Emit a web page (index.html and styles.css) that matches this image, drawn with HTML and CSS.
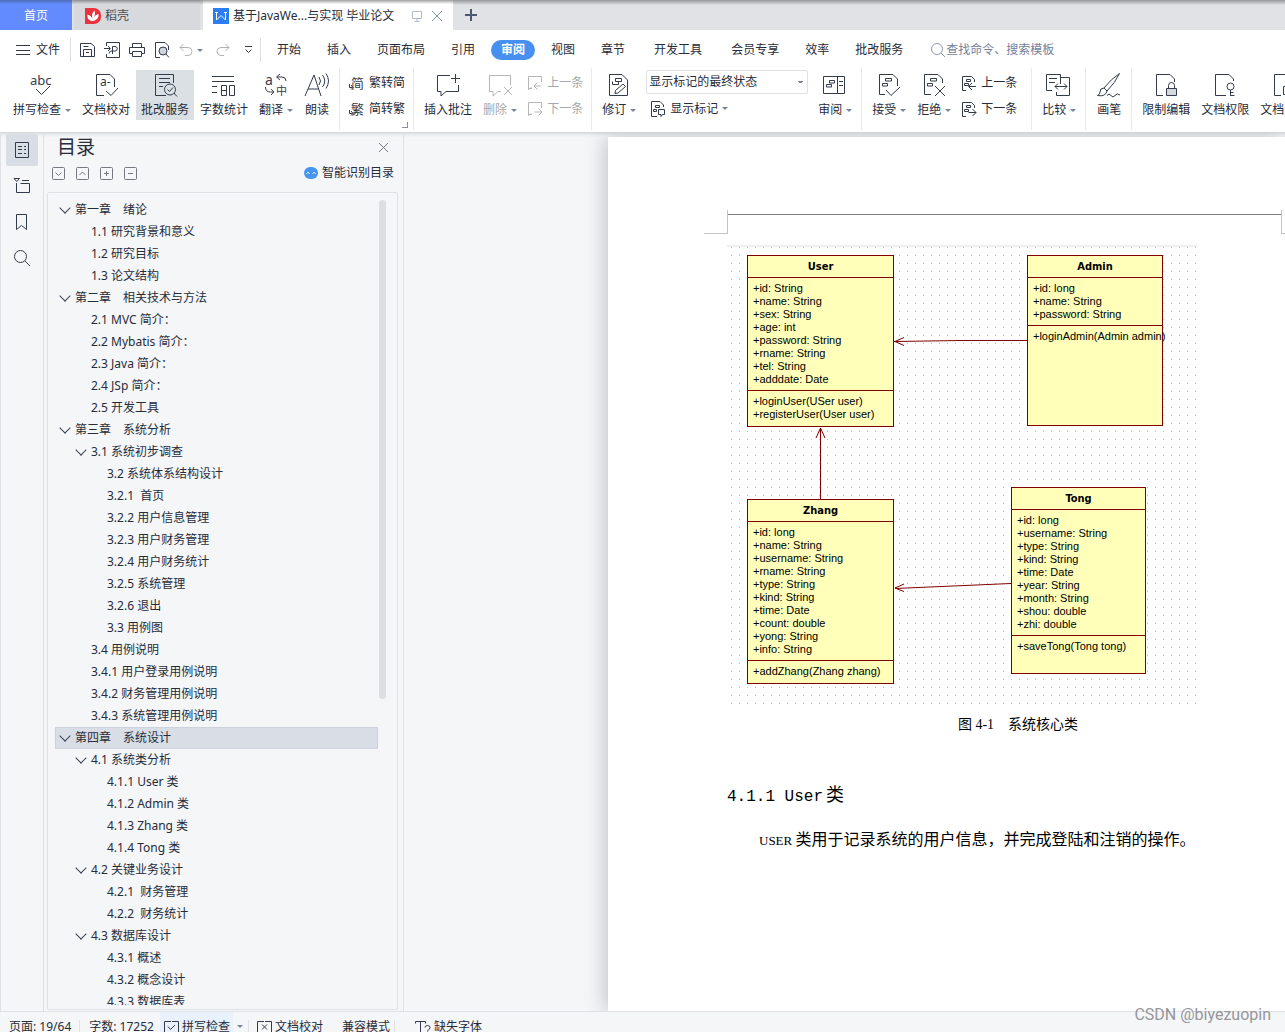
FILE: index.html
```html
<!DOCTYPE html>
<html lang="zh-CN">
<head>
<meta charset="utf-8">
<title>基于JavaWeb的设计与实现 毕业论文</title>
<link rel="stylesheet" href="styles.css">
</head>
<body>
<svg class="defs" aria-hidden="true">
  <symbol id="prev" viewBox="0 0 16 16"><path d="M5 13.500H1.500V1.500H14.500V7M14 11H7.500M10.500 7.500L7 11l3.500 3.500M1.500 11v3.500l3-2"/></symbol>
  <symbol id="next" viewBox="0 0 16 16"><path d="M5 13.500H1.500V1.500H14.500V7M7.500 11H15M11.500 7.500L15 11l-3.500 3.500M1.500 11v3.500l3-2"/></symbol>
  <symbol id="rprev" viewBox="0 0 16 16"><path d="M5 15.500H1.500V1.500H10.500L13.500 4.500V7M15 11.500H8M11 8l-3.500 3.500L11 15M5.500 4.500h4v2h-4zM3.500 8.500h4v2h-4z"/></symbol>
  <symbol id="rnext" viewBox="0 0 16 16"><path d="M5 15.500H1.500V1.500H10.500L13.500 4.500V7M7.500 11.500H15M11.500 8l3.500 3.500-3.500 3.500M5.500 4.500h4v2h-4zM3.500 8.500h4v2h-4z"/></symbol>
</svg>
<div class="app">
  <header class="tabs">
    <button class="tab tab-home">首页</button>
    <button class="tab tab-docer">
      <svg width="16" height="16" viewBox="0 0 16 16"><path fill="#e9343f" d="M0 0h9a7 7 0 0 1 7 7v2a7 7 0 0 1-7 7H0z"/><path fill="#fff" d="M7.500 13C3 12.500 2 9.500 2.500 6.500 5 7 6.800 9 7.500 11 6.500 7.500 7 4.500 9.500 2.500c1 2.500.5 5-.8 7.500C10 7.500 11.500 6.300 13.500 6c.5 4-2 6.500-6 7z"/></svg>
      稻壳
    </button>
    <div class="tab tab-doc">
      <svg width="16" height="16" viewBox="0 0 16 16"><path fill="#2b7df0" d="M0 0h16v16H0z"/><path fill="none" stroke="#fff" d="M3.500 4v8L8 7.500l4.500 4.500V4M2 4.500h3M11 4.500h3"/></svg>
      <span class="tab-name">基于JavaWe...与实现 毕业论文</span>
      <svg class="line pale" width="12" height="12" viewBox="0 0 12 12"><path d="M1.500 1.500h9v7h-9zM6 8.500v3M3.500 11.500h5"/></svg>
      <button class="plain" aria-label="关闭标签"><svg class="line pale-dark" width="12" height="12" viewBox="0 0 12 12"><path d="M1 1l10 10M11 1L1 11"/></svg></button>
    </div>
    <button class="plain new-tab" aria-label="新建"><svg width="12" height="12" viewBox="0 0 12 12"><path fill="none" stroke="#4b566f" stroke-width="2" d="M6 0v12M0 6h12"/></svg></button>
  </header>

  <nav class="menu">
    <button class="plain file"><svg class="line" width="14" height="11" viewBox="0 0 14 11"><path d="M0 .5h14M0 5.500h14M0 9.500h14"/></svg>文件</button>
    <div class="quick">
      <button class="plain" aria-label="保存"><svg class="line" width="16" height="16" viewBox="0 0 16 16"><path d="M1.500 14.500v-13H12l3.500 3v10zM4.500 14.500V7.500h8v7M4.500 4.500h5M7 10.500h3"/></svg></button>
      <button class="plain" aria-label="输出为PDF"><svg class="line" width="16" height="16" viewBox="0 0 16 16"><path d="M2.500 4V.500h13v15h-13V12M0 6.500h6M4 4l2.500 2.500L4 9M8.500 12V4.500H11a2 2 0 0 1 0 4.500H6.500L5 11.500"/></svg></button>
      <button class="plain" aria-label="打印"><svg class="line" width="16" height="16" viewBox="0 0 16 16"><path d="M3.500 5.500v-4h9v4M3.500 11.500h-3v-6h15v6h-3M3.500 9.500h9v5h-9z"/></svg></button>
      <button class="plain" aria-label="打印预览"><svg class="line" width="16" height="16" viewBox="0 0 16 16"><path d="M6 15.500H1.500V.500H11L14.500 4V8M12 12l3 3.500"/><circle cx="9" cy="9" r="4" fill="#cfd6dd"/></svg></button>
      <button class="plain" aria-label="撤销"><svg class="line faded" width="14" height="14" viewBox="0 0 14 14"><path d="M4.500 1L1 4.500 4.500 8M1 4.500h8a4 4 0 0 1 0 8H6"/></svg><i class="caret"></i></button>
      <button class="plain redo" aria-label="恢复"><svg class="line faded" width="14" height="14" viewBox="0 0 14 14"><path d="M9.500 1L13 4.500 9.500 8M13 4.500H5a4 4 0 0 0 0 8h3"/></svg></button>
      <button class="plain" aria-label="更多"><svg class="line" width="9" height="8" viewBox="0 0 9 8"><path d="M1 .5h7M1.500 3.500l3 3 3-3"/></svg></button>
    </div>
    <div class="menu-items">
      <button class="plain">开始</button><button class="plain">插入</button><button class="plain">页面布局</button><button class="plain">引用</button><button class="plain current">审阅</button><button class="plain">视图</button><button class="plain">章节</button><button class="plain wide">开发工具</button><button class="plain wide">会员专享</button><button class="plain">效率</button><button class="plain">批改服务</button>
    </div>
    <label class="search"><svg class="line" width="16" height="16" viewBox="0 0 16 16"><circle cx="7" cy="7" r="5.500"/><path d="M11 11l4 4"/></svg><input type="text" placeholder="查找命令、搜索模板" aria-label="查找命令"></label>
  </nav>

  <div class="ribbon">
    <div class="group">
      <button class="big"><svg class="line" width="26" height="26" viewBox="0 0 26 26"><text x="1" y="13" font-size="13">abc</text><path d="M7 17l5.500 5.500L21 14"/></svg><span>拼写检查<i class="caret"></i></span></button>
      <button class="big"><svg class="line" width="26" height="26" viewBox="0 0 26 26"><text x="7" y="14" font-size="12">a-</text><path d="M11 23.500H3.500V2.500H17L21.500 7V15M13 19l5 4.500L25 16"/></svg><span>文档校对</span></button>
      <button class="big pressed"><svg class="line" width="26" height="26" viewBox="0 0 26 26"><path d="M14 23.500H3.500V2.500H21.500V11M7 6.500h11M7 10.500h11M7 14.500h4M22 21l3 3.500"/><circle cx="18" cy="17.500" r="5.500"/><path d="M15.500 17.500l2 2 3.500-4"/></svg><span>批改服务</span></button>
      <button class="big"><svg class="line" width="26" height="26" viewBox="0 0 26 26"><path d="M1 4.500h22M1 9.500h22M1 14.500h5M1 20.500h5M10.500 13.500h5v10h-5zM10.500 18.500h5M18.500 13.500h5v10h-5z"/></svg><span>字数统计</span></button>
      <button class="big"><svg class="line" width="26" height="26" viewBox="0 0 26 26"><text x="2" y="13" font-size="14">a</text><text x="13" y="23" font-size="11">中</text><path d="M17 2l-3.500 3L17 8M14 5h5q4 0 4 4M2.500 15q0 5 5 5h3M8 17l3 3-3 3"/></svg><span>翻译<i class="caret"></i></span></button>
      <button class="big"><svg class="line" width="26" height="26" viewBox="0 0 26 26"><path d="M1 24L10 3l7 21M4 17h11M15 5q3 4 0 8M18.500 3q4.500 6 0 12M22 1.500q5 7.500 0 15"/></svg><span>朗读</span></button>
    </div>
    <div class="group launch">
      <div class="minis">
        <button class="mini"><svg class="line" width="16" height="16" viewBox="0 0 16 16"><text x="2" y="13" font-size="13">简</text><path d="M.5 9v3.500h3M2 10l2 2.500-2 2"/></svg>繁转简</button>
        <button class="mini"><svg class="line" width="16" height="16" viewBox="0 0 16 16"><text x="2" y="13" font-size="13">繁</text><path d="M.5 9v3.500h3M2 10l2 2.500-2 2"/></svg>简转繁</button>
      </div>
    </div>
    <div class="group">
      <button class="big"><svg class="line" width="26" height="26" viewBox="0 0 26 26"><path d="M15 3.500H2.500V19.500H6V24l5-4.500H23.500V13M20.500 2v9M16 6.500h9"/></svg><span>插入批注</span></button>
      <button class="big disabled" disabled><svg class="line" width="26" height="26" viewBox="0 0 26 26"><path d="M23.500 13V3.500H2.500V19.500H6V24l5-4.500h3M17 15l8 8M25 15l-8 8"/></svg><span>删除<i class="caret"></i></span></button>
      <div class="minis">
        <button class="mini disabled" disabled><svg class="line" width="16" height="16"><use href="#prev"/></svg>上一条</button>
        <button class="mini disabled" disabled><svg class="line" width="16" height="16"><use href="#next"/></svg>下一条</button>
      </div>
    </div>
    <div class="group">
      <button class="big"><svg class="line" width="26" height="26" viewBox="0 0 26 26"><path d="M3.500 2.500H16L21.500 8V23.500H3.500zM9.500 6.500h6v3h-6zM6.500 12.500h6v-3M6.500 9.500V12.500M17 12l2.500 2.500L12 21l-3 .5.500-3z"/></svg><span>修订<i class="caret"></i></span></button>
      <div class="minis">
        <select class="display" aria-label="显示标记状态"><option>显示标记的最终状态</option></select>
        <button class="mini markup"><svg class="line" width="16" height="16" viewBox="0 0 16 16"><path d="M7 15.500H1.500V.500H10L13.500 4V6M5.500 4.500h4v2h-4zM3.500 8.500h3v2h-3zM8.500 8.500h6v5h-2l-1.500 2v-2H8.500z"/></svg>显示标记<i class="caret tight"></i></button>
      </div>
      <button class="big"><svg class="line" width="26" height="26" viewBox="0 0 26 26"><path d="M1.500 4.500H22.500V21.500H1.500zM15.500 4.500v17M17 9.500h4M17 13.500h4M7.500 8.500h5v2.500h-5zM4.500 12.500h5V15h-5z"/></svg><span>审阅<i class="caret"></i></span></button>
    </div>
    <div class="group">
      <button class="big"><svg class="line" width="26" height="26" viewBox="0 0 26 26"><path d="M9 22.500H3.500V2.500H17L21.500 7V14M10 18l5 5.500L24 15M9.500 6.500h6V9h-6zM6.500 11.500h5V14h-5z"/></svg><span>接受<i class="caret"></i></span></button>
      <button class="big"><svg class="line" width="26" height="26" viewBox="0 0 26 26"><path d="M10 22.500H3.500V2.500H17L21.500 7V11M14 14l10 10M24 14L14 24M9.500 6.500h6V9h-6zM6.500 11.500h5V14h-5z"/></svg><span>拒绝<i class="caret"></i></span></button>
      <div class="minis roomy">
        <button class="mini"><svg class="line" width="16" height="16"><use href="#rprev"/></svg>上一条</button>
        <button class="mini"><svg class="line" width="16" height="16"><use href="#rnext"/></svg>下一条</button>
      </div>
    </div>
    <div class="group">
      <button class="big"><svg class="line" width="26" height="26" viewBox="0 0 26 26"><path d="M6 18.500H.5V2.500H14.500V12M14.500 5.500H23.500V23.500H10.500V20M3 6.500h8M3 10.500h6M9 14.500h12M12 11.500l-3 3 3 3M18 11.500l3 3-3 3"/></svg><span>比较<i class="caret"></i></span></button>
    </div>
    <div class="group">
      <button class="big"><svg class="line" width="26" height="26" viewBox="0 0 26 26"><path d="M23.500 1.500Q15 7 8 16l3 3Q19 11 23.500 1.500zM8 16q-4 0-4 4 0 2.500-2.500 3.500 8 1.500 9.500-4.500M11 23.500q2-3 4 0t4 0 5-.5"/></svg><span>画笔</span></button>
    </div>
    <div class="group">
      <button class="big"><svg class="line" width="26" height="26" viewBox="0 0 26 26"><path d="M10 23.500H3.500V2.500H17L21.500 7V10M15.500 16v-2.500a3 3 0 0 1 6 0V16"/><path fill="#d5d9df" d="M13.500 16.500h10v7h-10z"/></svg><span>限制编辑</span></button>
      <button class="big"><svg class="line" width="26" height="26" viewBox="0 0 26 26"><path d="M14 23.500H3.500V2.500H17L21.500 7V9M18.500 18v6M18.500 20.500h3M18.500 23.500h4"/><circle cx="18.500" cy="14.500" r="3.500"/></svg><span>文档权限</span></button>
      <button class="big"><svg class="line" width="26" height="26" viewBox="0 0 26 26"><path d="M10 23.500H3.500V2.500H17L21.500 7V10M12.500 14.500h10v8h-10z"/></svg><span>文档认证</span></button>
    </div>
  </div>

  <main class="work">
    <aside class="rail">
      <button class="plain on" aria-label="目录"><svg class="line" width="18" height="18" viewBox="0 0 18 18"><path d="M2.500 1.500h13v15h-13zM5 5.500h4M11 5.500h2M5 8.500h4M11 8.500h2M5 12.500h4M11 12.500h2"/></svg></button>
      <button class="plain" aria-label="章节"><svg class="line" width="18" height="18" viewBox="0 0 18 18"><path d="M1 1.500h5.500l-2.750 3zM9 3.500h7M3.500 6v9.500h13v-9h-9"/></svg></button>
      <button class="plain" aria-label="书签"><svg class="line" width="18" height="18" viewBox="0 0 18 18"><path d="M3.500 1.500h10v15l-5-4-5 4z"/></svg></button>
      <button class="plain" aria-label="查找"><svg class="line" width="18" height="18" viewBox="0 0 18 18"><circle cx="7.500" cy="7.500" r="6"/><path d="M12 12l5 5"/></svg></button>
    </aside>

    <section class="panel">
      <div class="panel-head"><h2>目录</h2><button class="plain" aria-label="关闭"><svg class="line gray" width="11" height="11" viewBox="0 0 11 11"><path d="M1 1l9 9M10 1l-9 9"/></svg></button></div>
      <div class="panel-tools">
        <button class="plain" aria-label="展开"><svg class="line gray" width="13" height="13" viewBox="0 0 13 13"><rect x=".5" y=".5" width="12" height="12" rx="1"/><path d="M3.500 5.500l3 3 3-3"/></svg></button>
        <button class="plain" aria-label="收起"><svg class="line gray" width="13" height="13" viewBox="0 0 13 13"><rect x=".5" y=".5" width="12" height="12" rx="1"/><path d="M3.500 8l3-3 3 3"/></svg></button>
        <button class="plain" aria-label="增加"><svg class="line gray" width="13" height="13" viewBox="0 0 13 13"><rect x=".5" y=".5" width="12" height="12" rx="1"/><path d="M6.500 4v5M4 6.500h5"/></svg></button>
        <button class="plain" aria-label="减少"><svg class="line gray" width="13" height="13" viewBox="0 0 13 13"><rect x=".5" y=".5" width="12" height="12" rx="1"/><path d="M4 6.500h5"/></svg></button>
        <button class="plain smart"><svg width="14" height="12" viewBox="0 0 14 12"><rect width="14" height="12" rx="6" fill="#4596f2"/><path fill="none" stroke="#fff" d="M2.500 6.500q1.500-2 3 0M8.500 6.500q1.500-2 3 0"/></svg>智能识别目录</button>
      </div>
      <div class="outline">
        <nav class="tree">
          <a href="#" class="l1 open">第一章　绪论</a>
          <a href="#" class="l2">1.1 研究背景和意义</a>
          <a href="#" class="l2">1.2 研究目标</a>
          <a href="#" class="l2">1.3 论文结构</a>
          <a href="#" class="l1 open">第二章　相关技术与方法</a>
          <a href="#" class="l2">2.1 MVC 简介：</a>
          <a href="#" class="l2">2.2 Mybatis 简介：</a>
          <a href="#" class="l2">2.3 Java 简介：</a>
          <a href="#" class="l2">2.4 JSp 简介：</a>
          <a href="#" class="l2">2.5 开发工具</a>
          <a href="#" class="l1 open">第三章　系统分析</a>
          <a href="#" class="l2 open">3.1 系统初步调查</a>
          <a href="#" class="l3">3.2 系统体系结构设计</a>
          <a href="#" class="l3">3.2.1  首页</a>
          <a href="#" class="l3">3.2.2 用户信息管理</a>
          <a href="#" class="l3">3.2.3 用户财务管理</a>
          <a href="#" class="l3">3.2.4 用户财务统计</a>
          <a href="#" class="l3">3.2.5 系统管理</a>
          <a href="#" class="l3">3.2.6 退出</a>
          <a href="#" class="l3">3.3 用例图</a>
          <a href="#" class="l2">3.4 用例说明</a>
          <a href="#" class="l2">3.4.1 用户登录用例说明</a>
          <a href="#" class="l2">3.4.2 财务管理用例说明</a>
          <a href="#" class="l2">3.4.3 系统管理用例说明</a>
          <a href="#" class="l1 open selected">第四章　系统设计</a>
          <a href="#" class="l2 open">4.1 系统类分析</a>
          <a href="#" class="l3">4.1.1 User 类</a>
          <a href="#" class="l3">4.1.2 Admin 类</a>
          <a href="#" class="l3">4.1.3 Zhang 类</a>
          <a href="#" class="l3">4.1.4 Tong 类</a>
          <a href="#" class="l2 open">4.2 关键业务设计</a>
          <a href="#" class="l3">4.2.1  财务管理</a>
          <a href="#" class="l3">4.2.2  财务统计</a>
          <a href="#" class="l2 open">4.3 数据库设计</a>
          <a href="#" class="l3">4.3.1 概述</a>
          <a href="#" class="l3">4.3.2 概念设计</a>
          <a href="#" class="l3">4.3.3 数据库表</a>
        </nav>
        <div class="scroll"><div class="thumb"></div></div>
      </div>
    </section>

    <section class="desk">
      <article class="page">
        <div class="marks"><span class="corner"></span><span class="head-line"></span><span class="corner-right"></span></div>
        <div class="text">
          <div class="diagram">
            <svg class="links" width="470" height="460" viewBox="0 0 470 460"><path d="M300 95.500H234L167 96.500M177 92.500l-9 4 9 4M93.500 254V183M89 193l4.500-10 4.500 10M284 338.500L168 343.500M177 339l-9 4 9 3.500"/></svg>
            <div class="uml user"><h4>User</h4><ul><li>+id: String</li><li>+name: String</li><li>+sex: String</li><li>+age: int</li><li>+password: String</li><li>+rname: String</li><li>+tel: String</li><li>+adddate: Date</li></ul><ul><li>+loginUser(USer user)</li><li>+registerUser(User user)</li></ul></div>
            <div class="uml admin"><h4>Admin</h4><ul><li>+id: long</li><li>+name: String</li><li>+password: String</li></ul><ul><li>+loginAdmin(Admin admin)</li></ul></div>
            <div class="uml zhang"><h4>Zhang</h4><ul><li>+id: long</li><li>+name: String</li><li>+username: String</li><li>+rname: String</li><li>+type: String</li><li>+kind: String</li><li>+time: Date</li><li>+count: double</li><li>+yong: String</li><li>+info: String</li></ul><ul><li>+addZhang(Zhang zhang)</li></ul></div>
            <div class="uml tong"><h4>Tong</h4><ul><li>+id: long</li><li>+username: String</li><li>+type: String</li><li>+kind: String</li><li>+time: Date</li><li>+year: String</li><li>+month: String</li><li>+shou: double</li><li>+zhi: double</li></ul><ul><li>+saveTong(Tong tong)</li></ul></div>
          </div>
          <p class="caption">图 4-1　系统核心类</p>
          <h3><span class="latin">4.1.1 User</span><span>类</span></h3>
          <p class="body"><span class="latin">USER </span>类用于记录系统的用户信息，并完成登陆和注销的操作。</p>
        </div>
      </article>
    </section>
  </main>

  <footer class="status">
    <span class="cell count">页面: 19/64</span>
    <span class="cell count">字数: 17252</span>
    <button class="plain cell hot"><svg class="line" width="15" height="14" viewBox="0 0 15 14"><path d="M7 1.500H.500v11H14.500v-11H8M4 6.500l2.500 3L11 5"/></svg>拼写检查<i class="caret"></i></button>
    <button class="plain cell"><svg class="line" width="15" height="14" viewBox="0 0 15 14"><path d="M7 1.500H.500v11H14.500v-11H8M5 4.500l5 5M10 4.500l-5 5"/></svg>文档校对</button>
    <span class="cell compat">兼容模式</span>
    <button class="plain cell"><svg class="line" width="16" height="14" viewBox="0 0 16 14"><path d="M.5 3.500v-2h10v2M5.500 1.500v12M3.500 13.500h4M10 7.500q0-2 2.500-2t2.500 2-2.500 3v1M12.500 12.500v1.500"/></svg>缺失字体</button>
  </footer>
  <div class="watermark">CSDN @biyezuopin</div>
</div>
</body>
</html>
```

FILE: styles.css
```css
* { box-sizing: border-box; }
body {
  margin: 0;
  font: 12px/16px "Noto Sans", "Noto Sans CJK SC", sans-serif;
  color: #262c3a;
  background: #f5f6f8;
}
h2, h3, h4, p, ul { margin: 0; padding: 0; font-weight: 400; }
ul { list-style: none; }
button, input, select { font: inherit; color: inherit; }
a { color: inherit; text-decoration: none; }
.defs { display: none; }
.app { position: relative; display: flex; flex-direction: column; height: 100vh; overflow: hidden; }
.plain { display: flex; align-items: center; padding: 0; border: 0; background: none; white-space: nowrap; }
.line { fill: none; stroke: #343b4c; flex: none; overflow: visible; }
.line text { fill: #343b4c; stroke: none; }
.pale { stroke: #b3bacb; }
.pale-dark { stroke: #8490ad; }
.gray { stroke: #737881; }
.faded { stroke: #b0b2b6; }
.caret {
  width: 0; height: 0; margin-left: 4px; flex: none;
  border: 3px solid transparent; border-top-color: #7a849c; border-bottom: 0;
}
.tight { margin-left: 0; }

/* document tabs */
.tabs { flex: none; display: flex; height: 30px; background: linear-gradient(#96979a, #e1e2e6 5px); }
.tab { display: flex; align-items: center; border: 0; height: 30px; padding-top: 2px; white-space: nowrap; }
.tab-home { width: 72px; justify-content: center; color: #fff; background: linear-gradient(#4c6db4, #628bff 4px); }
.tab-docer { width: 126px; margin-left: 2px; padding: 2px 11px 0; gap: 4px; color: #4a4e57; background: linear-gradient(#8c8d90, #d7d9dc 4px); }
.tab-doc { width: 250px; margin-left: 3px; padding: 2px 10px 0 10px; gap: 4px; background: linear-gradient(#a0a0a0, #fff 4px); }
.tab-name { flex: 1; }
.tab-doc .plain { margin-left: 4px; }
.new-tab { margin-left: 12px; }

/* menu row */
.menu { flex: none; display: flex; align-items: center; height: 38px; padding-top: 2px; background: #fff; }
.file { gap: 6px; width: 71px; height: 24px; padding-left: 16px; border-right: 1px solid #dcdee3; }
.quick { display: flex; align-items: center; gap: 9px; width: 190px; height: 24px; padding-left: 8px; border-right: 1px solid #dcdee3; }
.quick .redo { margin: 0 5px 0 4px; }
.menu-items { display: flex; padding-left: 3px; }
.menu-items .plain { padding: 0 13px; height: 20px; }
.menu-items .wide { padding-left: 16px; }
.menu-items .current { margin: 0 3px; padding: 0 10px; border-radius: 10px; background: #4790f0; color: #fff; font-weight: 700; }
.search { display: flex; align-items: center; margin-left: 14px; }
.search .line { stroke: #8e98ae; }
.search input { width: 140px; padding: 0; border: 0; background: none; }
.search input::placeholder { color: #74809c; opacity: 1; }

/* ribbon */
.ribbon { flex: none; display: flex; height: 64px; padding-left: 3px; background: #fff; overflow: hidden; }
.group { position: relative; flex: none; display: flex; gap: 1px; padding: 2px 4px 0 5px; height: 62px; border-right: 1px solid #e8e9ec; }
.group:last-child { border-right: 0; }
.big {
  display: flex; flex-direction: column; align-items: center; gap: 4px;
  height: 50px; padding: 2px 5px; border: 0; background: none; white-space: nowrap;
}
.big span { display: flex; align-items: center; }
.pressed { background: #dbe0e5; }
.disabled { color: #a7a8ab; }
.disabled .line { stroke: #b5b6b9; }
.minis { display: flex; flex-direction: column; gap: 2px; padding: 0 4px; }
.roomy { padding-right: 10px; }
.mini { display: flex; align-items: center; gap: 4px; height: 24px; padding: 1px 0 0; border: 0; background: none; white-space: nowrap; }
.markup { padding-left: 4px; }
.launch::after {
  content: ""; position: absolute; right: 5px; bottom: 2px; width: 5px; height: 5px;
  border: solid #8a8f9b; border-width: 0 1px 1px 0;
}
.display {
  width: 162px; height: 24px; padding: 0 2px; border: 1px solid #dfe1e5; border-radius: 2px; appearance: none;
  background-color: #fff;
  background-image: linear-gradient(to bottom left, #7a849c 50%, transparent 50%), linear-gradient(to bottom right, #7a849c 50%, transparent 50%);
  background-position: right 6px center, right 3px center;
  background-size: 3px 3px;
  background-repeat: no-repeat;
}

/* work area */
.work { flex: 1; min-height: 0; display: flex; box-shadow: inset 0 4px 4px -3px #c3c5c9; }
.rail { flex: none; width: 44px; padding: 2px 0 0 5px; display: flex; flex-direction: column; gap: 4px; border: solid #dfe1e7; border-width: 0 1px; }
.rail .plain { width: 32px; height: 32px; justify-content: center; border-radius: 2px; }
.rail .on { background: #d9dde5; }
.panel { flex: none; width: 360px; display: flex; flex-direction: column; padding: 3px 5px 1px 3px; border-right: 1px solid #dfe1e7; }
.panel-head { display: flex; justify-content: space-between; align-items: center; height: 24px; padding: 0 9px 0 10px; }
.panel-head h2 { font-size: 19px; line-height: 24px; }
.panel-tools { display: flex; align-items: center; gap: 11px; height: 28px; padding: 0 4px 0 5px; }
.smart { gap: 4px; margin-left: auto; }
.outline { flex: 1; min-height: 0; display: flex; margin-top: 5px; padding: 6px 11px 4px 7px; border: 1px solid #dfe1e7; border-radius: 2px; }
.tree { flex: 1; overflow: hidden; }
.tree a { display: flex; align-items: center; height: 22px; white-space: pre; }
.tree .l1 { padding-left: 20px; }
.tree .l2 { padding-left: 36px; }
.tree .l3 { padding-left: 52px; }
.tree .open::before {
  content: ""; width: 7px; height: 7px; margin: -4px 6px 0 -14px;
  border: solid #3b4252; border-width: 0 1px 1px 0; transform: rotate(45deg);
}
.tree .selected { background: #d9dde5; box-shadow: inset 0 0 0 1px #cdd3de; }
.scroll { flex: none; width: 8px; padding: 1px 0 0 1px; }
.thumb { height: 62%; border-radius: 4px; background: #dcdfe2; }
.desk { flex: 1; min-width: 0; display: flex; padding: 5px 0 0 204px; overflow: hidden; }

/* document page */
.page { flex: 1; min-width: 0; padding: 73px 0 0 96px; background: #fff; color: #000; box-shadow: -4px 0 18px #c4c6ca; }
.marks { display: flex; height: 24px; }
.corner { width: 24px; border: solid #c4c4c4; border-width: 0 1px 1px 0; }
.head-line { flex: 1; margin-top: 4px; border-top: 1px solid #808080; }
.corner-right { width: 4px; border: solid #c4c4c4; border-width: 0 0 1px 1px; }
.text { padding: 11px 4px 0 23px; }
.diagram {
  position: relative; width: 470px; height: 460px; border-top: 2px solid #efefef;
  background: repeating-linear-gradient(90deg, #fff 0 4px, transparent 4px 5px, #fff 5px 8px), repeating-linear-gradient(#c0c0c0 0 1px, #fff 1px 8px);
}
.links { position: absolute; left: 0; top: -2px; fill: none; stroke: #800000; }
.uml { position: absolute; border: 1px solid #800000; background: #ffffb9; font: 11px/13px "Liberation Sans", sans-serif; white-space: nowrap; }
.uml h4 { font: 700 11px/21px "DejaVu Sans Condensed", "DejaVu Sans", sans-serif; text-align: center; }
.uml ul { padding: 4px 5px; border-top: 1px solid #800000; }
.user { left: 20px; top: 8px; width: 147px; height: 172px; }
.admin { left: 300px; top: 8px; width: 136px; height: 171px; }
.zhang { left: 20px; top: 252px; width: 147px; height: 185px; }
.tong { left: 284px; top: 240px; width: 135px; height: 187px; }
.caption { margin-top: 10px; padding-left: 28px; text-align: center; font: 14px/20px "Liberation Serif", "Noto Sans CJK SC", serif; }
.text h3 { display: flex; align-items: baseline; gap: 3px; margin-top: 46px; font: 18px/24px "Noto Sans CJK SC", sans-serif; }
.text h3 .latin { font: 16px/24px "Liberation Mono", monospace; }
.body { margin-top: 19px; padding-left: 32px; font: 16px/24px "Liberation Serif", "Noto Sans CJK SC", serif; }
.body .latin { font-size: 13px; }

/* status bar */
.status { flex: none; display: flex; height: 21px; padding-left: 9px; border-top: 1px solid #dfe1e7; overflow: hidden; white-space: nowrap; }
.cell { display: flex; align-items: center; gap: 3px; height: 29px; padding-right: 14px; }
.count { padding-right: 18px; background: linear-gradient(#dfe1e7, #dfe1e7) right 9px top 8px / 1px 100% no-repeat; }
.hot {
  padding: 0 14px 0 4px; margin-left: -12px;
  background: linear-gradient(#dfe1e7, #dfe1e7) right 8px top 8px / 1px 100% no-repeat, linear-gradient(90deg, #e8f1fc 73px, transparent 73px);
}
.compat { padding: 0 25px 0 5px; background: linear-gradient(#dfe1e7, #dfe1e7) right 20px top 8px / 1px 100% no-repeat; }
.watermark { position: absolute; right: 14px; bottom: 7px; font: 16px/20px Roboto, sans-serif; color: #94969a; }
```
